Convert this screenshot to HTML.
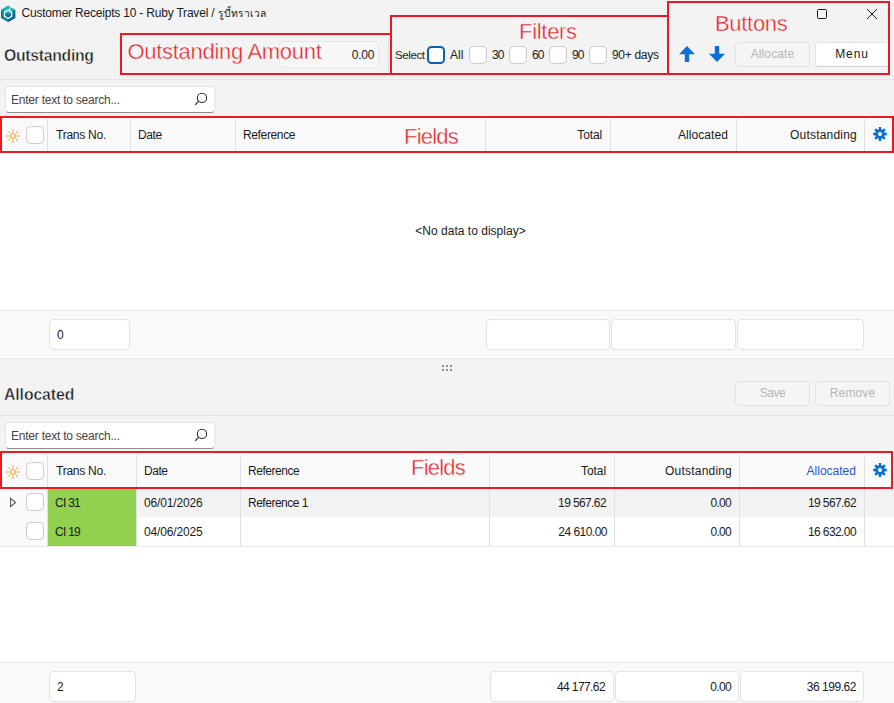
<!DOCTYPE html>
<html lang="en">
<head>
<meta charset="utf-8">
<title>Customer Receipts 10 - Ruby Travel</title>
<style>
*{box-sizing:border-box;margin:0;padding:0}
html,body{width:894px;height:703px;overflow:hidden;background:#f3f3f3}
body{position:relative;font-family:"Liberation Sans","DejaVu Sans",sans-serif;font-size:12px;color:#1b1b1b}
.abs{position:absolute}
.t{position:absolute;white-space:nowrap;line-height:16px;height:16px;letter-spacing:-0.2px}
.r{text-align:right}
.hline{position:absolute;left:0;width:894px;height:1px;background:#e5e5e5}
.red{position:absolute;border:2px solid #ea1a24;pointer-events:none}
.ann{position:absolute;color:#ea1a24;font-family:"Liberation Sans",sans-serif;white-space:nowrap;line-height:26px;font-size:22px;letter-spacing:-0.3px;transform:scaleY(1.03);transform-origin:0 20.3px;-webkit-text-stroke:0.4px #f6f6f6}
.cb{position:absolute;width:18px;height:18px;border:1px solid #cbcbcb;border-radius:4.5px;background:#fff}
.box{position:absolute;background:#fff;border:1px solid #e3e3e3;border-radius:4px}
.btn{position:absolute;border:1px solid #e3e3e3;border-radius:4px;text-align:center;line-height:23px;height:25px}
.vsep{position:absolute;width:1px;background:#e0e0e0}
.h1{position:absolute;font-weight:bold;font-size:15.8px;-webkit-text-stroke:0.45px #f3f3f3;line-height:20px;color:#1b1b1b;white-space:nowrap}
</style>
</head>
<body>

<!-- title bar -->
<svg class="abs" style="left:0;top:5px" width="17" height="18" viewBox="0 5 17 18">
  <polygon points="8.1,5.8 15.2,9.9 15.2,17.9 8.1,21.9 1,17.9 1,9.9" fill="#0d7c9c"/>
  <polygon points="8.1,5.8 15.2,9.9 8.1,14 1,9.9" fill="#1ab4be"/>
  <polygon points="8.1,14 15.2,9.9 15.2,17.9 8.1,21.9" fill="#0a6a8b"/>
  <polygon points="8.1,9.3 12.4,11.8 12.4,16.7 8.1,19.2 3.8,16.7 3.8,11.8" fill="#f1f5f6"/>
  <path d="M9.2 9.9L10.6 7.3" stroke="#f1f5f6" stroke-width="1.1" fill="none"/>
  <polygon points="8.1,11.2 11,12.9 11,16.1 8.1,17.8 5.2,16.1 5.2,12.9" fill="#0b7394"/>
  <polygon points="8.1,11.2 11,12.9 8.1,14.6 5.2,12.9" fill="#18b0ba"/>
</svg>
<div class="t" style="left:21.5px;top:5px;letter-spacing:-0.2px">Customer Receipts 10 - Ruby Travel / <span style="font-size:10.3px;letter-spacing:0">รูบี้ทราเวล</span></div>
<svg class="abs" style="left:816px;top:8px" width="12" height="12" viewBox="0 0 12 12"><rect x="1.5" y="1.5" width="9" height="9" rx="1" fill="none" stroke="#1b1b1b" stroke-width="1"/></svg>
<svg class="abs" style="left:866px;top:8px" width="12" height="12" viewBox="0 0 12 12"><path d="M1 1L11 11M11 1L1 11" stroke="#1b1b1b" stroke-width="1" fill="none"/></svg>

<!-- top panel -->
<div class="h1" style="left:4px;top:45.5px;letter-spacing:-0.3px">Outstanding</div>
<div class="box" style="left:279px;top:41px;width:100px;height:27px;background:#f7f7f7;border-color:#e6e6e6"></div>
<div class="t r" style="left:300px;width:74px;top:47px;letter-spacing:-0.3px">0.00</div>
<div class="vsep" style="left:388px;top:38px;height:33px"></div>

<div class="t" style="left:395px;top:47px;font-size:11.5px;letter-spacing:-0.4px">Select</div>
<div class="cb" style="left:427px;top:46px;border:2px solid #0f5fb8"></div>
<div class="t" style="left:450px;top:47px;letter-spacing:0.05px">All</div>
<div class="cb" style="left:469px;top:46px"></div>
<div class="t" style="left:492px;top:47px;letter-spacing:-0.9px">30</div>
<div class="cb" style="left:509px;top:46px"></div>
<div class="t" style="left:532px;top:47px;letter-spacing:-0.9px">60</div>
<div class="cb" style="left:549px;top:46px"></div>
<div class="t" style="left:572px;top:47px;letter-spacing:-0.9px">90</div>
<div class="cb" style="left:589px;top:46px"></div>
<div class="t" style="left:612px;top:47px;letter-spacing:-0.3px">90+ days</div>

<svg class="abs" style="left:679px;top:46px" width="16" height="16" viewBox="0 0 16 16"><path d="M8 0L16 8.2H10.2V16H5.8V8.2H0Z" fill="#0c6fd6"/></svg>
<svg class="abs" style="left:709px;top:46px" width="16" height="16" viewBox="0 0 16 16"><path d="M8 16L16 7.8H10.2V0H5.8V7.8H0Z" fill="#0c6fd6"/></svg>
<div class="btn" style="left:735px;top:42px;width:75px;color:#b5b5b5;background:#f5f5f5;letter-spacing:0.13px">Allocate</div>
<div class="btn" style="left:815px;top:42px;width:75px;background:#fff;border-bottom-color:#cfcfcf;text-indent:-1px;letter-spacing:0.93px">Menu</div>

<div class="hline" style="top:79px"></div>

<!-- search 1 -->
<div class="box" style="left:5px;top:86px;width:210px;height:27px;border-bottom-color:#8f8f8f"></div>
<div class="t" style="left:11px;top:92px;color:#444;letter-spacing:-0.23px">Enter text to search...</div>
<svg class="abs" style="left:194px;top:92px" width="14" height="14" viewBox="0 0 14 14"><circle cx="8" cy="5.9" r="4.6" fill="none" stroke="#2b2b2b" stroke-width="1.1"/><path d="M4.7 9.2L1.2 12.8" stroke="#2b2b2b" stroke-width="1.2"/></svg>

<!-- grid 1 -->
<div class="abs" style="left:0;top:117px;width:894px;height:36px;background:#fafafa"></div>
<div class="abs" style="left:0;top:153px;width:894px;height:157px;background:#fff"></div>
<div class="hline" style="top:310px;background:#e8e8e8"></div>
<div class="abs" style="left:0;top:311px;width:894px;height:47px;background:#f9f9f9"></div>
<div class="hline" style="top:358px;background:#e8e8e8"></div>

<div class="vsep" style="left:47px;top:119px;height:32px"></div>
<div class="vsep" style="left:130px;top:119px;height:32px"></div>
<div class="vsep" style="left:235px;top:119px;height:32px"></div>
<div class="vsep" style="left:485px;top:119px;height:32px"></div>
<div class="vsep" style="left:610px;top:119px;height:32px"></div>
<div class="vsep" style="left:736px;top:119px;height:32px"></div>
<div class="vsep" style="left:864px;top:119px;height:32px"></div>

<svg class="abs" style="left:5.5px;top:128.5px" width="14" height="14" viewBox="0 0 14 14"><circle cx="7" cy="7" r="2.4" fill="none" stroke="#ff8f0f" stroke-width="1"/><path d="M11.10 7.00L13.30 7.00 M9.97 9.97L11.17 11.17 M7.00 11.10L7.00 13.30 M4.03 9.97L2.83 11.17 M2.90 7.00L0.70 7.00 M4.03 4.03L2.83 2.83 M7.00 2.90L7.00 0.70 M9.97 4.03L11.17 2.83" stroke="#ff8f0f" stroke-width="0.95" stroke-linecap="round" fill="none"/></svg>
<svg class="abs" style="left:873px;top:127px" width="14" height="14" viewBox="0 0 14 14"><path fill-rule="evenodd" fill="#0c6fd6" d="M5.79 2.25 L5.82 0.10 L8.18 0.10 L8.21 2.25 L9.50 2.79 L11.04 1.28 L12.72 2.96 L11.21 4.50 L11.75 5.79 L13.90 5.82 L13.90 8.18 L11.75 8.21 L11.21 9.50 L12.72 11.04 L11.04 12.72 L9.50 11.21 L8.21 11.75 L8.18 13.90 L5.82 13.90 L5.79 11.75 L4.50 11.21 L2.96 12.72 L1.28 11.04 L2.79 9.50 L2.25 8.21 L0.10 8.18 L0.10 5.82 L2.25 5.79 L2.79 4.50 L1.28 2.96 L2.96 1.28 L4.50 2.79Z M7 5A2 2 0 1 0 7 9A2 2 0 1 0 7 5Z"/></svg>
<div class="cb" style="left:26px;top:126px"></div>
<div class="t" style="left:56px;top:127px;letter-spacing:-0.24px">Trans No.</div>
<div class="t" style="left:138px;top:127px;letter-spacing:-0.37px">Date</div>
<div class="t" style="left:243px;top:127px;letter-spacing:-0.36px">Reference</div>
<div class="t r" style="left:500px;width:102px;top:127px;letter-spacing:-0.12px">Total</div>
<div class="t r" style="left:620px;width:108px;top:127px;letter-spacing:0.08px">Allocated</div>
<div class="t r" style="left:740px;width:117px;top:127px;letter-spacing:0.21px">Outstanding</div>

<div class="t" style="left:0;width:941px;text-align:center;top:223px;letter-spacing:0.02px">&lt;No data to display&gt;</div>

<div class="box" style="left:49px;top:319px;width:81px;height:31px"></div>
<div class="t" style="left:57px;top:327px">0</div>
<div class="box" style="left:486px;top:319px;width:124px;height:31px"></div>
<div class="box" style="left:611px;top:319px;width:125px;height:31px"></div>
<div class="box" style="left:737px;top:319px;width:127px;height:31px"></div>

<!-- splitter -->
<svg class="abs" style="left:441px;top:364px" width="12" height="8" viewBox="0 0 12 8"><g fill="#8c8c8c"><rect x="1" y="1" width="2" height="2"/><rect x="5" y="1" width="2" height="2"/><rect x="9" y="1" width="2" height="2"/><rect x="1" y="5" width="2" height="2"/><rect x="5" y="5" width="2" height="2"/><rect x="9" y="5" width="2" height="2"/></g></svg>

<!-- allocated panel -->
<div class="h1" style="left:4px;top:384.5px;letter-spacing:-0.1px">Allocated</div>
<div class="btn" style="left:735px;top:381px;width:75px;color:#b5b5b5;background:#f5f5f5;letter-spacing:-0.5px">Save</div>
<div class="btn" style="left:815px;top:381px;width:75px;color:#b5b5b5;background:#f5f5f5;letter-spacing:0.12px">Remove</div>
<div class="hline" style="top:415px"></div>

<!-- search 2 -->
<div class="box" style="left:5px;top:422px;width:210px;height:27px;border-bottom-color:#8f8f8f"></div>
<div class="t" style="left:11px;top:428px;color:#444;letter-spacing:-0.23px">Enter text to search...</div>
<svg class="abs" style="left:194px;top:428px" width="14" height="14" viewBox="0 0 14 14"><circle cx="8" cy="5.9" r="4.6" fill="none" stroke="#2b2b2b" stroke-width="1.1"/><path d="M4.7 9.2L1.2 12.8" stroke="#2b2b2b" stroke-width="1.2"/></svg>

<!-- grid 2 -->
<div class="abs" style="left:0;top:453px;width:894px;height:36px;background:#fafafa"></div>
<div class="abs" style="left:0;top:489px;width:894px;height:173px;background:#fff"></div>
<div class="abs" style="left:0;top:489px;width:894px;height:28px;background:#f3f3f3"></div>
<div class="abs" style="left:0;top:489px;width:47px;height:57px;background:#fafafa"></div>
<div class="abs" style="left:48px;top:489px;width:88px;height:57px;background:#92d050"></div>
<div class="hline" style="top:546px;background:#e8e8e8"></div>
<div class="hline" style="top:662px;background:#e8e8e8"></div>
<div class="abs" style="left:0;top:663px;width:894px;height:40px;background:#f9f9f9"></div>

<div class="vsep" style="left:47px;top:455px;height:91px"></div>
<div class="vsep" style="left:136px;top:455px;height:91px"></div>
<div class="vsep" style="left:240px;top:455px;height:91px"></div>
<div class="vsep" style="left:489px;top:455px;height:91px"></div>
<div class="vsep" style="left:614px;top:455px;height:91px"></div>
<div class="vsep" style="left:739px;top:455px;height:91px"></div>
<div class="vsep" style="left:864px;top:455px;height:91px"></div>

<svg class="abs" style="left:5.5px;top:464.5px" width="14" height="14" viewBox="0 0 14 14"><circle cx="7" cy="7" r="2.4" fill="none" stroke="#ff8f0f" stroke-width="1"/><path d="M11.10 7.00L13.30 7.00 M9.97 9.97L11.17 11.17 M7.00 11.10L7.00 13.30 M4.03 9.97L2.83 11.17 M2.90 7.00L0.70 7.00 M4.03 4.03L2.83 2.83 M7.00 2.90L7.00 0.70 M9.97 4.03L11.17 2.83" stroke="#ff8f0f" stroke-width="0.95" stroke-linecap="round" fill="none"/></svg>
<svg class="abs" style="left:873px;top:463px" width="14" height="14" viewBox="0 0 14 14"><path fill-rule="evenodd" fill="#0c6fd6" d="M5.79 2.25 L5.82 0.10 L8.18 0.10 L8.21 2.25 L9.50 2.79 L11.04 1.28 L12.72 2.96 L11.21 4.50 L11.75 5.79 L13.90 5.82 L13.90 8.18 L11.75 8.21 L11.21 9.50 L12.72 11.04 L11.04 12.72 L9.50 11.21 L8.21 11.75 L8.18 13.90 L5.82 13.90 L5.79 11.75 L4.50 11.21 L2.96 12.72 L1.28 11.04 L2.79 9.50 L2.25 8.21 L0.10 8.18 L0.10 5.82 L2.25 5.79 L2.79 4.50 L1.28 2.96 L2.96 1.28 L4.50 2.79Z M7 5A2 2 0 1 0 7 9A2 2 0 1 0 7 5Z"/></svg>
<div class="cb" style="left:26px;top:462px"></div>
<div class="t" style="left:56px;top:463px;letter-spacing:-0.24px">Trans No.</div>
<div class="t" style="left:144px;top:463px;letter-spacing:-0.47px">Date</div>
<div class="t" style="left:248px;top:463px;letter-spacing:-0.45px">Reference</div>
<div class="t r" style="left:500px;width:106px;top:463px;letter-spacing:-0.08px">Total</div>
<div class="t r" style="left:620px;width:112px;top:463px;letter-spacing:0.2px">Outstanding</div>
<div class="t r" style="left:745px;width:111px;top:463px;color:#2457d6;letter-spacing:0.01px">Allocated</div>

<svg class="abs" style="left:9px;top:497px" width="9" height="11" viewBox="0 0 9 11"><path d="M1.6 1.4L6.5 5.5L1.6 9.6Z" fill="none" stroke="#555" stroke-width="1.1" stroke-linejoin="miter"/></svg>
<div class="cb" style="left:26px;top:493px"></div>
<div class="t" style="left:55px;top:495px;letter-spacing:-0.73px">CI 31</div>
<div class="t" style="left:144px;top:495px;letter-spacing:-0.16px">06/01/2026</div>
<div class="t" style="left:248px;top:495px;letter-spacing:-0.49px">Reference 1</div>
<div class="t r" style="left:500px;width:106px;top:495px;letter-spacing:-0.61px">19 567.62</div>
<div class="t r" style="left:620px;width:111px;top:495px;letter-spacing:-0.7px">0.00</div>
<div class="t r" style="left:745px;width:111px;top:495px;letter-spacing:-0.59px">19 567.62</div>

<div class="cb" style="left:26px;top:522px"></div>
<div class="t" style="left:55px;top:524px;letter-spacing:-0.73px">CI 19</div>
<div class="t" style="left:144px;top:524px;letter-spacing:-0.16px">04/06/2025</div>
<div class="t r" style="left:500px;width:107px;top:524px;letter-spacing:-0.52px">24 610.00</div>
<div class="t r" style="left:620px;width:111px;top:524px;letter-spacing:-0.7px">0.00</div>
<div class="t r" style="left:745px;width:111px;top:524px;letter-spacing:-0.59px">16 632.00</div>

<div class="box" style="left:49px;top:671px;width:87px;height:31px"></div>
<div class="t" style="left:57px;top:679px">2</div>
<div class="box" style="left:490px;top:671px;width:124px;height:31px"></div>
<div class="t r" style="left:495px;width:110px;top:679px;letter-spacing:-0.59px">44 177.62</div>
<div class="box" style="left:615px;top:671px;width:124px;height:31px"></div>
<div class="t r" style="left:620px;width:111px;top:679px;letter-spacing:-0.67px">0.00</div>
<div class="box" style="left:740px;top:671px;width:124px;height:31px"></div>
<div class="t r" style="left:745px;width:111px;top:679px;letter-spacing:-0.46px">36 199.62</div>

<!-- annotations -->
<div class="red" style="left:120px;top:33px;width:272px;height:42px"></div>
<div class="ann" style="left:127.5px;top:39px;">Outstanding Amount</div>
<div class="red" style="left:390px;top:15px;width:279px;height:60px"></div>
<div class="ann" style="left:519px;top:19px;">Filters</div>
<div class="red" style="left:667px;top:1px;width:223px;height:74px"></div>
<div class="ann" style="left:715px;top:10.5px;">Buttons</div>
<div class="red" style="left:0;top:116px;width:894px;height:37px"></div>
<div class="ann" style="left:404px;top:124px;letter-spacing:-0.8px">Fields</div>
<div class="red" style="left:0;top:451px;width:893px;height:38px"></div>
<div class="ann" style="left:411px;top:455px;letter-spacing:-0.8px">Fields</div>

</body>
</html>
